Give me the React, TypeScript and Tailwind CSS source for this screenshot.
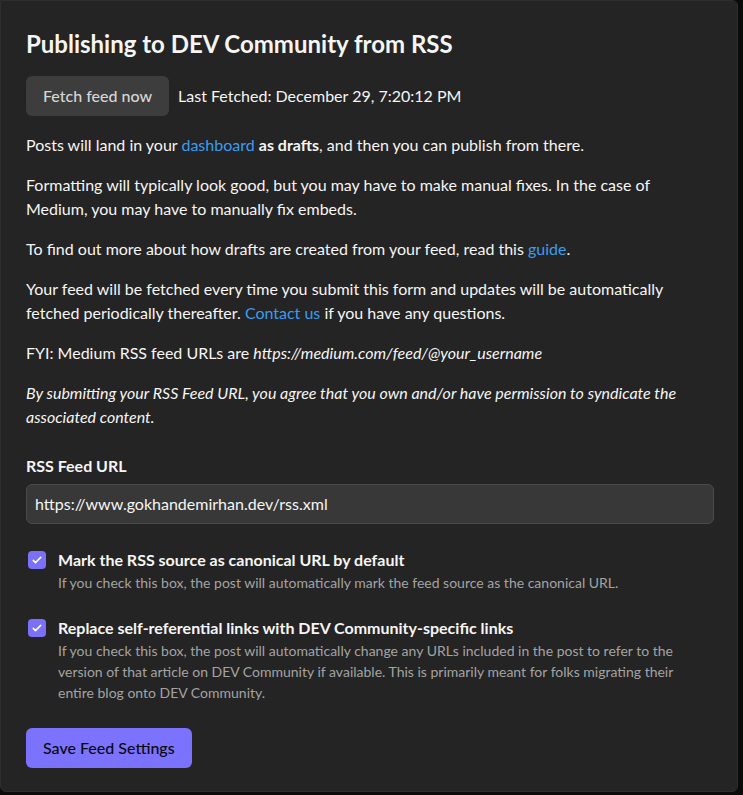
import React from "react";

function Check() {
  return (
    <span className="mt-[3px] flex h-[18px] w-[18px] shrink-0 items-center justify-center rounded-[4px] bg-[#7b70f8]">
      <svg viewBox="0 0 16 16" className="h-[12px] w-[12px]" fill="none" stroke="white" strokeWidth={2} strokeLinecap="round" strokeLinejoin="round">
        <path d="M3 8.5l3 3 7-7" />
      </svg>
    </span>
  );
}

function Option({ title, desc }: { title: string; desc: string }) {
  return (
    <div className="flex gap-3 pl-[2px]">
      <Check />
      <div>
        <div className="text-[16px] font-bold leading-6 text-[#f5f5f5]">{title}</div>
        <p className="text-[14px] leading-[21px] text-[#a3a3a3]">{desc}</p>
      </div>
    </div>
  );
}

export default function App() {
  return (
    <div className="min-h-screen bg-[#0b0b0b] font-['Lato',sans-serif]">
      <div className="h-[792px] w-[738px] rounded-b-md rounded-tr-md border border-[#2e2e2e] bg-[#242424] px-[25px] pt-[27px] text-[16px] text-[#f5f5f5]">
        <h1 className="text-[24px] font-bold leading-[32px] text-[#f5f5f5]">Publishing to DEV Community from RSS</h1>

        <div className="mt-[16px] flex items-center gap-[9px]">
          <button className="h-10 rounded-md bg-[#3d3d3d] px-[17px] font-medium text-[#d6d6d6]">Fetch feed now</button>
          <span>Last Fetched: December 29, 7:20:12 PM</span>
        </div>

        <div className="mt-[17px] flex flex-col gap-4 leading-6">
          <p>
            Posts will land in your <a className="text-[#3b9cf0]">dashboard</a> <strong>as drafts</strong>, and then you can publish from there.
          </p>
          <p>Formatting will typically look good, but you may have to make manual fixes. In the case of Medium, you may have to manually fix embeds.</p>
          <p>
            To find out more about how drafts are created from your feed, read this <a className="text-[#3b9cf0]">guide</a>.
          </p>
          <p>
            Your feed will be fetched every time you submit this form and updates will be automatically fetched periodically thereafter.{" "}
            <a className="text-[#3b9cf0]">Contact us</a> if you have any questions.
          </p>
          <p>
            FYI: Medium RSS feed URLs are <em>https://medium.com/feed/@your_username</em>
          </p>
          <p className="italic">By submitting your RSS Feed URL, you agree that you own and/or have permission to syndicate the associated content.</p>
        </div>

        <label className="mt-[25px] block font-bold leading-6">RSS Feed URL</label>
        <div className="mt-[6px] flex h-10 w-[688px] items-center rounded-md border border-[#4a4a4a] bg-[#383838] px-2">
          https://www.gokhandemirhan.dev/rss.xml
        </div>

        <div className="mt-[24px] flex flex-col gap-[23px]">
          <Option
            title="Mark the RSS source as canonical URL by default"
            desc="If you check this box, the post will automatically mark the feed source as the canonical URL."
          />
          <Option
            title="Replace self-referential links with DEV Community-specific links"
            desc="If you check this box, the post will automatically change any URLs included in the post to refer to the version of that article on DEV Community if available. This is primarily meant for folks migrating their entire blog onto DEV Community."
          />
        </div>

        <button className="mt-[25px] h-10 rounded-md bg-[#7b72ff] px-[17px] font-medium text-[#0a0a0a]">Save Feed Settings</button>
      </div>
    </div>
  );
}
